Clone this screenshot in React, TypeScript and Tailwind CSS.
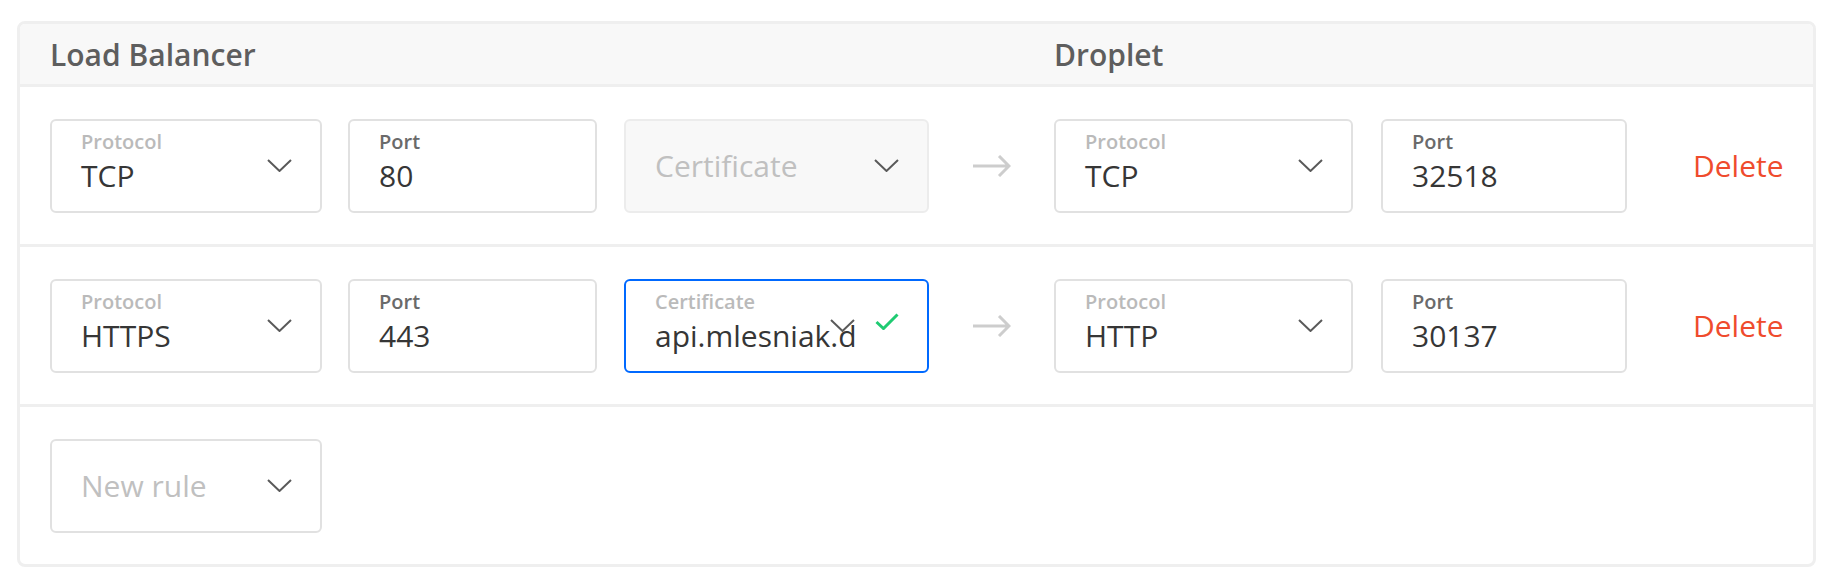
import React from "react"

function Chevron({ className = "" }: { className?: string }) {
    return (
        <svg width="25" height="13" viewBox="0 0 25 13" fill="none" className={`shrink-0 ${className}`}>
            <path d="M1 1L12.5 12L24 1" stroke="#5a5a5a" strokeWidth="2" />
        </svg>
    )
}

function Arrow() {
    return (
        <svg width="38" height="22" viewBox="0 0 38 22" fill="none" className="ml-[44px] mr-[43px] shrink-0">
            <path d="M0 11H36M26 1L36 11L26 21" stroke="#cdcdcd" strokeWidth="3" />
        </svg>
    )
}

function Check() {
    return (
        <svg width="24" height="17" viewBox="0 0 24 17" fill="none" className="ml-[20px] mt-[32px] shrink-0 self-start">
            <path d="M1.5 9L8.5 15.5L22.5 1.5" stroke="#1fcb72" strokeWidth="3" />
        </svg>
    )
}

// select with a small label on top
function SelectBox({ label, value, w }: { label: string; value: string; w: string }) {
    return (
        <div className={`flex h-[94px] ${w} shrink-0 rounded-md border-2 border-[#e1e1e1] bg-white pl-[29px] pr-[28px]`}>
            <div className="flex min-w-0 flex-1 flex-col pt-[11px]">
                <span className="text-[20px] leading-[20px] font-semibold text-[#bababa]">{label}</span>
                <span className="mt-[6px] text-[30px] leading-[36px] text-[#363636]">{value}</span>
            </div>
            <Chevron className="self-center" />
        </div>
    )
}

function InputBox({ label, value, w }: { label: string; value: string; w: string }) {
    return (
        <div className={`flex h-[94px] ${w} shrink-0 flex-col rounded-md border-2 border-[#e1e1e1] bg-white pl-[29px] pt-[11px]`}>
            <span className="text-[20px] leading-[20px] font-semibold text-[#6a6a6a]">{label}</span>
            <span className="mt-[6px] text-[30px] leading-[36px] text-[#363636]">{value}</span>
        </div>
    )
}

function PlaceholderBox({ text, w, disabled }: { text: string; w: string; disabled?: boolean }) {
    return (
        <div
            className={`flex h-[94px] ${w} shrink-0 items-center rounded-md border-2 pl-[29px] pr-[28px] ${
                disabled ? "border-[#ececec] bg-[#f8f8f8]" : "border-[#e1e1e1] bg-white"
            }`}
        >
            <span className="flex-1 text-[30px] leading-[36px] text-[#c0c0c0]">{text}</span>
            <Chevron />
        </div>
    )
}

function CertBox({ value }: { value: string }) {
    return (
        <div className="flex h-[94px] w-[305px] shrink-0 rounded-md border-2 border-[#0069ff] bg-white pl-[29px] pr-[28px]">
            <div className="flex min-w-0 flex-1 flex-col overflow-hidden pt-[11px]">
                <span className="text-[20px] leading-[20px] font-semibold text-[#bababa]">Certificate</span>
                <span className="mt-[6px] whitespace-nowrap text-[30px] leading-[36px] text-[#363636]">{value}</span>
            </div>
            <Chevron className="-ml-[25px] self-center" />
            <Check />
        </div>
    )
}

function DeleteLink() {
    return <button className="ml-[66px] text-[30px] leading-[36px] text-[#ef4b2d]">Delete</button>
}

export default function App() {
    return (
        <div className="min-h-screen bg-white pl-[17px] pr-[18px] pt-[21px] font-['Open_Sans',sans-serif]">
            <div className="overflow-hidden rounded-lg border-[3px] border-[#efefef] bg-white">
                {/* header */}
                <div className="flex h-[63px] items-center border-b-[3px] border-[#efefef] bg-[#f8f8f8] pl-[30px] text-[30px] font-semibold text-[#5e5e5e]">
                    <span className="w-[1004px]">Load Balancer</span>
                    <span>Droplet</span>
                </div>

                {/* rule 1 */}
                <div className="flex h-[160px] items-center border-b-[3px] border-[#efefef] px-[30px]">
                    <SelectBox label="Protocol" value="TCP" w="w-[272px]" />
                    <div className="ml-[26px]">
                        <InputBox label="Port" value="80" w="w-[249px]" />
                    </div>
                    <div className="ml-[27px]">
                        <PlaceholderBox text="Certificate" w="w-[305px]" disabled />
                    </div>
                    <Arrow />
                    <SelectBox label="Protocol" value="TCP" w="w-[299px]" />
                    <div className="ml-[28px]">
                        <InputBox label="Port" value="32518" w="w-[246px]" />
                    </div>
                    <DeleteLink />
                </div>

                {/* rule 2 */}
                <div className="flex h-[160px] items-center border-b-[3px] border-[#efefef] px-[30px]">
                    <SelectBox label="Protocol" value="HTTPS" w="w-[272px]" />
                    <div className="ml-[26px]">
                        <InputBox label="Port" value="443" w="w-[249px]" />
                    </div>
                    <div className="ml-[27px]">
                        <CertBox value="api.mlesniak.de" />
                    </div>
                    <Arrow />
                    <SelectBox label="Protocol" value="HTTP" w="w-[299px]" />
                    <div className="ml-[28px]">
                        <InputBox label="Port" value="30137" w="w-[246px]" />
                    </div>
                    <DeleteLink />
                </div>

                {/* new rule */}
                <div className="flex h-[157px] items-center px-[30px]">
                    <PlaceholderBox text="New rule" w="w-[272px]" />
                </div>
            </div>
        </div>
    )
}
